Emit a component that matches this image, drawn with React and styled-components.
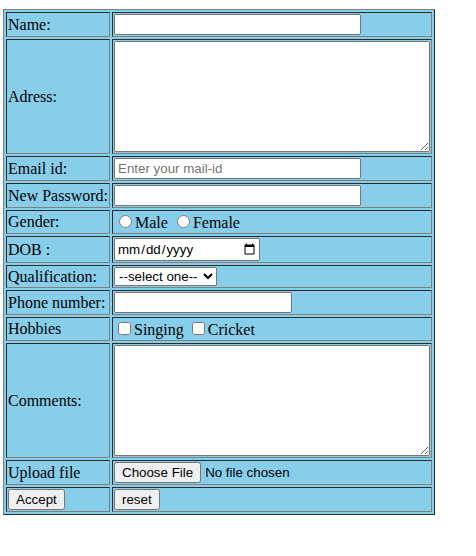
import React from "react";
import styled, { createGlobalStyle } from "styled-components";

const GlobalStyle = createGlobalStyle`
  body {
    margin: 0;
    background: #fff;
    font-family: "Liberation Serif", "Times New Roman", serif;
    font-size: 16px;
  }
  input, select, textarea, button {
    font-family: "Liberation Sans", Arial, sans-serif;
    font-size: 13.333px;
  }
`;

const Page = styled.div`
  padding: 9px 0 0 3px;
`;

const FormTable = styled.table`
  background-color: skyblue;
  border: 1px outset grey;
  border-spacing: 2px;
  width: 430px;
`;

const Cell = styled.td`
  border: 1px inset grey;
  padding: 1px;
  vertical-align: middle;
  width: ${(p) => (p.$label ? "100px" : "auto")};
  white-space: nowrap;
`;

const TextInput = styled.input`
  box-sizing: border-box;
  width: ${(p) => p.$w || "247px"};
  height: 21px;
  &::placeholder {
    color: #757575;
  }
`;

const DateInput = styled.input`
  box-sizing: border-box;
  width: 146px;
  height: 23px;
`;

const Select = styled.select`
  box-sizing: border-box;
  width: 103px;
  height: 19px;
`;

const TextArea = styled.textarea`
  box-sizing: border-box;
  width: 316px;
  height: ${(p) => p.$h || "111px"};
  display: block;
`;

const Option = styled.label``;

const Row = ({ label, children }) => (
  <tr>
    <Cell $label>{label}</Cell>
    <Cell>{children}</Cell>
  </tr>
);

export default function App() {
  return (
    <Page>
      <GlobalStyle />
      <form>
        <FormTable>
          <tbody>
            <Row label="Name:">
              <TextInput type="text" />
            </Row>
            <Row label="Adress:">
              <TextArea />
            </Row>
            <Row label="Email id:">
              <TextInput type="email" placeholder="Enter your mail-id" />
            </Row>
            <Row label="New Password:">
              <TextInput type="password" />
            </Row>
            <Row label="Gender:">
              <Option>
                <input type="radio" name="gender" />
                Male
              </Option>{" "}
              <Option>
                <input type="radio" name="gender" />
                Female
              </Option>
            </Row>
            <Row label="DOB :">
              <DateInput type="date" />
            </Row>
            <Row label="Qualification:">
              <Select defaultValue="">
                <option value="">--select one--</option>
                <option>10th</option>
                <option>12th</option>
                <option>Graduate</option>
              </Select>
            </Row>
            <Row label="Phone number:">
              <TextInput type="tel" $w="178px" />
            </Row>
            <Row label="Hobbies">
              <Option>
                <input type="checkbox" />
                Singing
              </Option>{" "}
              <Option>
                <input type="checkbox" />
                Cricket
              </Option>
            </Row>
            <Row label="Comments:">
              <TextArea />
            </Row>
            <Row label="Upload file">
              <input type="file" />
            </Row>
            <tr>
              <Cell $label>
                <button type="submit">Accept</button>
              </Cell>
              <Cell>
                <button type="reset">reset</button>
              </Cell>
            </tr>
          </tbody>
        </FormTable>
      </form>
    </Page>
  );
}
